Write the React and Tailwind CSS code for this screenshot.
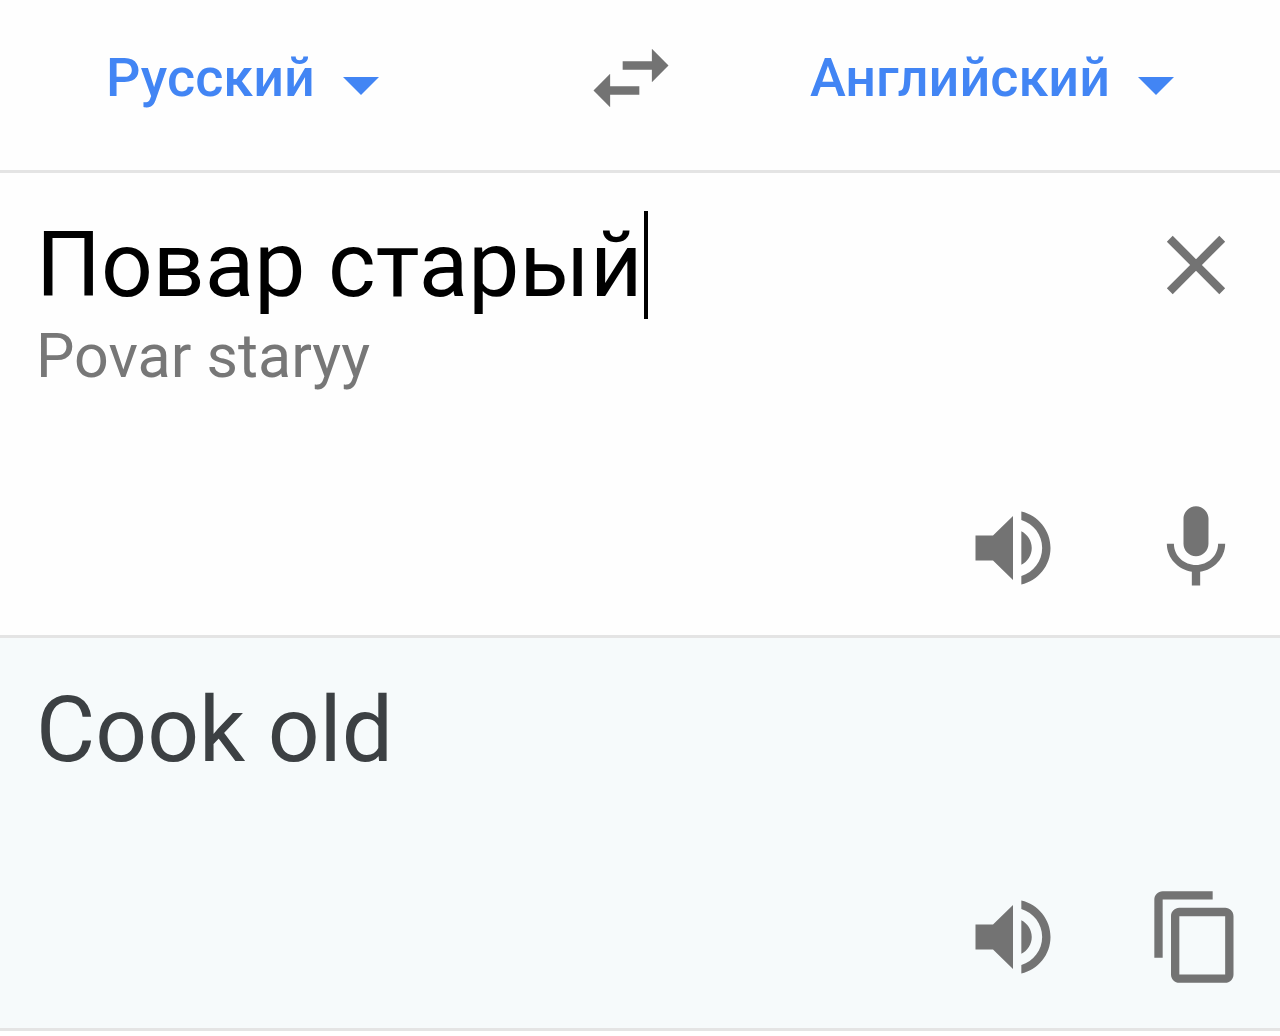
import { useState } from 'react';

const ICONS = {
  swap: 'M6.99 11L3 15l3.99 4v-3H14v-2H6.99v-3zM21 9l-3.99-4v3H10v2h7.01v3L21 9z',
  close: 'M19 6.41L17.59 5 12 10.59 6.41 5 5 6.41 10.59 12 5 17.59 6.41 19 12 13.41 17.59 19 19 17.59 13.41 12z',
  speaker: 'M3 9v6h4.2l4.8 4.7V4.3L7.2 9H3zm13.5 3c0-1.77-1.02-3.29-2.5-4.03v8.05c1.48-.73 2.5-2.25 2.5-4.02zM14 3.23v2.06c2.89.86 5 3.54 5 6.71s-2.11 5.85-5 6.71v2.06c4.01-.91 7-4.49 7-8.77s-2.99-7.86-7-8.77z',
  mic: 'M12 14c1.66 0 2.99-1.34 2.99-3L15 5c0-1.66-1.34-3-3-3S9 3.34 9 5v6c0 1.66 1.34 3 3 3zm5.3-3c0 3-2.54 5.1-5.3 5.1S6.7 14 6.7 11H5c0 3.41 2.72 6.23 6 6.72V21h2v-3.28c3.28-.48 6-3.3 6-6.72h-1.7z',
  copy: 'M16 1H4c-1.1 0-2 .9-2 2v14h2V3h12V1zm3 4H8c-1.1 0-2 .9-2 2v14c0 1.1.9 2 2 2h11c1.1 0 2-.9 2-2V7c0-1.1-.9-2-2-2zm0 16H8V7h11v14z',
};

function IconButton({ icon, label, onClick }) {
  return (
    <button type="button" aria-label={label} onClick={onClick} className="size-[100px] shrink-0 text-[#737373]">
      <svg viewBox="0 0 24 24" fill="currentColor" className="size-full">
        <path d={ICONS[icon]} />
      </svg>
    </button>
  );
}

function LanguageSelect({ label, defaultValue, options }) {
  return (
    <label className="flex items-center gap-7 text-[#4285f4]">
      <select
        aria-label={label}
        defaultValue={defaultValue}
        className="h-20 appearance-none bg-transparent text-[54px] leading-[80px] font-medium outline-none field-sizing-content"
      >
        {options.map((name) => (
          <option key={name}>{name}</option>
        ))}
      </select>
      <svg viewBox="0 0 10 5" fill="currentColor" className="mt-4 h-[18px] w-9 shrink-0">
        <path d="M0 0h10L5 5z" />
      </svg>
    </label>
  );
}

export default function App() {
  const [text, setText] = useState('Повар старый');

  return (
    <main className="bg-[#fefefe] font-[Roboto,sans-serif]">
      {/* Language bar */}
      <header className="grid grid-cols-[33fr_100px_34fr] items-center border-b-3 border-[#e4e4e4] pt-7 pb-[42px]">
        <div className="flex pl-[106px]">
          <LanguageSelect label="Исходный язык" defaultValue="Русский" options={['Русский', 'Английский']} />
        </div>
        <IconButton icon="swap" label="Поменять языки" />
        <div className="flex justify-end pr-[106px]">
          <LanguageSelect label="Язык перевода" defaultValue="Английский" options={['Английский', 'Русский']} />
        </div>
      </header>

      {/* Source text */}
      <section className="border-b-3 border-[#e4e4e4] pt-[38px] pr-[34px] pb-[37px] pl-9">
        <div className="flex items-center justify-between">
          <div className="flex gap-0.5">
            <input
              type="text"
              aria-label="Текст для перевода"
              value={text}
              onChange={(e) => setText(e.target.value)}
              className="h-[108px] bg-transparent text-[91px] leading-[108px] text-black caret-transparent outline-none field-sizing-content"
            />
            <span className="w-1 bg-black" />
          </div>
          <IconButton icon="close" label="Очистить" onClick={() => setText('')} />
        </div>
        <p className="text-[61px] leading-[74px] text-[#777]">Povar staryy</p>
        <div className="mt-[105px] flex justify-end gap-[83px]">
          <IconButton icon="speaker" label="Прослушать" />
          <IconButton icon="mic" label="Голосовой ввод" />
        </div>
      </section>

      {/* Translation */}
      <section className="border-b-3 border-[#e4e4e4] bg-[#f6fafb] pt-[38px] pr-[34px] pb-[41px] pl-9">
        <p className="text-[91px] leading-[108px] text-[#3c4043]">Cook old</p>
        <div className="mt-[103px] flex justify-end gap-[83px]">
          <IconButton icon="speaker" label="Прослушать перевод" />
          <IconButton icon="copy" label="Копировать" />
        </div>
      </section>
    </main>
  );
}
